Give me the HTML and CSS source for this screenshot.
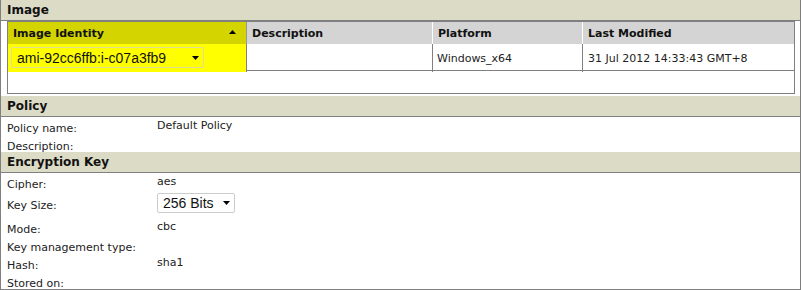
FILE: index.html
```html
<!DOCTYPE html>
<html>
<head>
<meta charset="utf-8">
<link rel="stylesheet" href="styles.css">
</head>
<body>
<div class="panel">
  <div class="band">Image</div>
  <div class="grid-wrap">
    <div class="grid-row head">
      <div class="hcell sorted">Image Identity <svg class="sort" width="7" height="4" viewBox="0 0 7 4"><polygon points="0,4 7,4 3.5,0" fill="#000"/></svg></div>
      <div class="hcell">Description</div>
      <div class="hcell">Platform</div>
      <div class="hcell last">Last Modified</div>
    </div>
    <div class="grid-row body">
      <div class="cell sorted">
        <div class="select wide"><span>ami-92cc6ffb:i-c07a3fb9</span><svg class="caret" width="7" height="4" viewBox="0 0 7 4"><polygon points="0,0 7,0 3.5,4" fill="#000"/></svg></div>
      </div>
      <div class="cell"></div>
      <div class="cell">Windows_x64</div>
      <div class="cell last">31 Jul 2012 14:33:43 GMT+8</div>
    </div>
  </div>

  <div class="band">Policy</div>
  <div class="props">
    <div class="prop"><div class="label">Policy name:</div><div class="value">Default Policy</div></div>
    <div class="prop short"><div class="label">Description:</div><div class="value"></div></div>
  </div>

  <div class="band">Encryption Key</div>
  <div class="props">
    <div class="prop"><div class="label">Cipher:</div><div class="value">aes</div></div>
    <div class="prop tall"><div class="label">Key Size:</div><div class="value"><div class="select small"><span>256 Bits</span><svg class="caret" width="7" height="4" viewBox="0 0 7 4"><polygon points="0,0 7,0 3.5,4" fill="#000"/></svg></div></div></div>
    <div class="prop"><div class="label">Mode:</div><div class="value">cbc</div></div>
    <div class="prop"><div class="label">Key management type:</div><div class="value"></div></div>
    <div class="prop"><div class="label">Hash:</div><div class="value">sha1</div></div>
    <div class="prop"><div class="label">Stored on:</div><div class="value"></div></div>
  </div>
</div>
</body>
</html>
```

FILE: styles.css
```css
* { box-sizing: border-box; }
html, body { margin: 0; padding: 0; background: #fff; }
body {
  font-family: "DejaVu Sans", Verdana, sans-serif;
  font-size: 11px;
  color: #222;
}
.panel {
  width: 801px;
  height: 290px;
  border-left: 1px solid #808080;
  border-right: 1px solid #808080;
  border-bottom: 1px solid #808080;
  overflow: hidden;
}
.band {
  height: 21px;
  background: #dcdbc6;
  border-bottom: 1px solid #808080;
  font-weight: bold;
  font-size: 12px;
  line-height: 20px;
  padding-left: 6px;
  color: #111;
}
.grid-wrap {
  margin: 0 5px 2px 6px;
  height: 73px;
  border: 1px solid #808080;
}
.grid-row {
  display: grid;
  grid-template-columns: 239px 186px 150px 211px;
  border-bottom: 1px solid #808080;
}
.grid-row.head { height: 22px; }
.grid-row.body { height: 27px; }
.hcell {
  background: #d4d4d4;
  border-right: 1px solid #fff;
  font-weight: bold;
  padding: 1px 0 0 5px;
  line-height: 21px;
  color: #111;
}
.hcell.sorted {
  background: #d4d400;
  border-right: 1px solid #999;
  display: flex;
  align-items: center;
  justify-content: space-between;
  padding-right: 10px;
}
.sort { display: block; margin-top: -3px; }
.hcell.last, .cell.last { border-right: none; }
.cell {
  border-right: 1px solid #808080;
  padding: 2px 0 0 4px;
  line-height: 26px;
}
.cell.last { padding-left: 5px; }
.cell.sorted { background: #ffff00; padding: 3px 0 0 3px; }
.select {
  display: flex;
  align-items: center;
  justify-content: space-between;
  font-family: "Liberation Sans", Arial, sans-serif;
  font-size: 14px;
  color: #111;
  border: 1px solid #ccc;
  border-radius: 2px;
}
.select.wide {
  width: 193px;
  height: 21px;
  border-color: #dede9a;
  padding: 0 4px 0 5px;
}
.select.small {
  width: 78px;
  height: 20px;
  background: #fff;
  padding: 0 4px 0 5px;
}
.caret { display: block; }
.prop {
  display: grid;
  grid-template-columns: 156px 1fr;
  height: 18px;
}
.prop.short { height: 17px; }
.prop .label { padding: 5px 0 0 6px; line-height: 13px; }
.prop .value { padding: 2px 0 0 0; line-height: 13px; }
.prop.tall { height: 27px; }
.prop.tall .label { padding-top: 8px; }
.prop.tall .value { padding-top: 2px; }
```
